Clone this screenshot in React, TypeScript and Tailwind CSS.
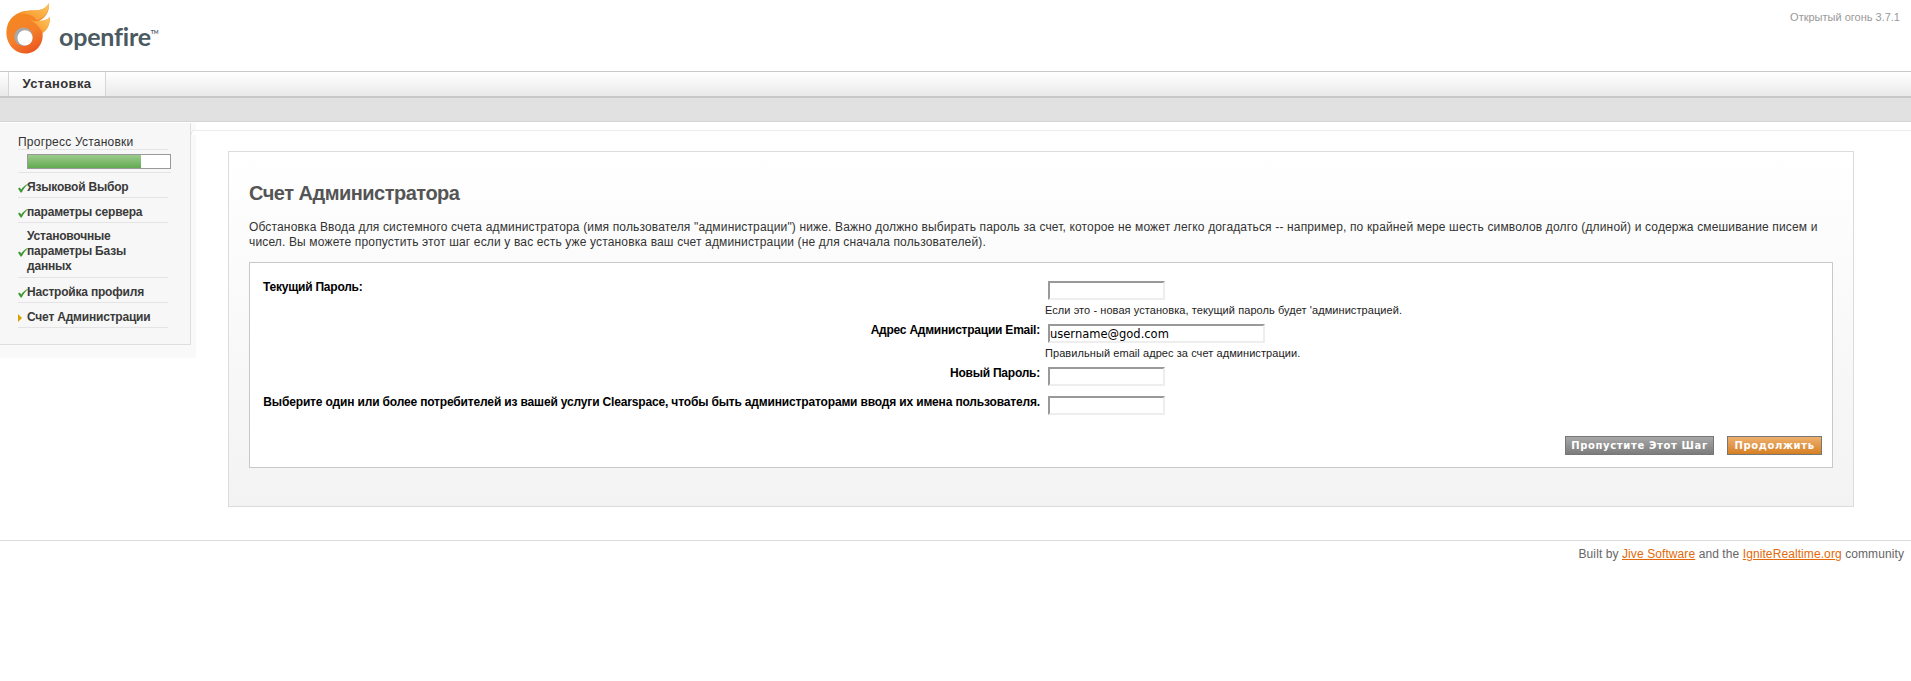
import React from "react";

const sans = "font-['Liberation_Sans',Arial,sans-serif]";

function Logo() {
  return (
    <svg width="56" height="56" viewBox="0 0 56 56" className="shrink-0">
      <defs>
        <linearGradient id="ring" x1="0.15" y1="0.1" x2="0.6" y2="1">
          <stop offset="0" stopColor="#f58a20" />
          <stop offset="0.6" stopColor="#f4802a" />
          <stop offset="1" stopColor="#ea5523" />
        </linearGradient>
        <linearGradient id="flame" x1="0" y1="1" x2="1" y2="0">
          <stop offset="0" stopColor="#f68d20" />
          <stop offset="1" stopColor="#fdc860" />
        </linearGradient>
      </defs>
      <path d="M48.7 3.3C46 9 40 11 33 10.5C22 10 10 14 7 27C4 40 12 53 25 53.5C36 54 44 44 42.5 33C47 30 50 25 50 17C47 20 43 21 39 21C45 18 50 12 48.7 3.3Z" fill="url(#ring)" />
      <path d="M48.7 3.3C46 9 40 11 33 10.5C28 10.3 23 11.5 19 14C27 13 33 15 37 20.5C44 18 50 12 48.7 3.3Z" fill="url(#flame)" />
      <path d="M50 17C47 20 43 21 39 21C36 21.5 33 21 30 20C35 22 40 27 42.5 33C47 30 50 25 50 17Z" fill="url(#flame)" />
      <circle cx="23.5" cy="36.7" r="9.2" fill="#a8a8a8" />
      <circle cx="25" cy="37.8" r="7.6" fill="#fff" />
    </svg>
  );
}

function Check() {
  return (
    <svg width="10" height="9" viewBox="0 0 10 9" className="block shrink-0">
      <path d="M0 4.6L1.8 3.6L3.2 5.4C4.8 3.2 6.8 1.4 9.6 0L9.8 0.5C7.4 2.4 5.4 5 3.8 8.6L2.6 8.6Z" fill="#3f9a35" />
    </svg>
  );
}

function SideItem({ children, active }: { children: React.ReactNode; active?: boolean }) {
  return (
    <div className="flex items-center h-[25px] border-b border-[#e4e4e4] text-[12px] leading-[15px] font-bold tracking-[-0.2px] text-[#3a3a3a] pt-[5px]">
      <span className="w-[9px] shrink-0 flex items-center">
        {active ? (
          <span className="w-0 h-0 border-y-[4px] border-y-transparent border-l-[4px] border-l-[#d9a000]" />
        ) : (
          <span className="-mr-1 mt-[1px]"><Check /></span>
        )}
      </span>
      <span className="flex-1">{children}</span>
    </div>
  );
}

function Field({ w, value }: { w: string; value?: string }) {
  return (
    <input
      readOnly
      value={value ?? ""}
      className={`${w} block h-[19px] border-2 border-t-[#999] border-l-[#999] border-r-[#eee] border-b-[#eee] bg-white px-0 text-[11.5px] text-black font-['DejaVu_Sans',sans-serif] outline-none`}
    />
  );
}

const label = "font-bold text-right -mt-[2px] pr-[1px] tracking-[-0.23px] whitespace-nowrap";
const help = "-ml-[3px] mt-[3px] text-[11px] leading-[14px] tracking-[0.07px] text-[#222]";

export default function App() {
  return (
    <div className={`${sans} w-full h-[681px] bg-white overflow-hidden`}>
      <header className="h-[71px] flex justify-between border-b border-[#c8c8c8] box-content">
        <div className="flex items-start">
          <Logo />
          <span className="ml-[3px] mt-[16px] flex items-start font-['Lato',sans-serif] font-bold text-[25px] leading-[40px] tracking-[-0.2px] text-[#4b5960]">
            openfire<sup className="text-[5px] leading-[8px] mt-[12px] top-0 font-bold">TM</sup>
          </span>
        </div>
        <div className="pt-[10px] pr-[11px] text-[11px] leading-[14px] text-[#999]">Открытый огонь 3.7.1</div>
      </header>

      <nav className="h-[26px] flex pl-[8px] bg-gradient-to-b from-white to-[#e9e9e9] border-b-2 border-[#c8c8c8]">
        <div className="w-[98px] h-[24px] flex items-center justify-center bg-gradient-to-b from-white to-[#f3f3f3] border-x border-[#d6d6d6] text-[13px] font-bold tracking-[0.35px] text-[#333]">
          Установка
        </div>
      </nav>
      <div className="h-[24px] bg-[#e1e1e1] border-b border-[#d4d4d4]" />

      <main className="flex h-[417px] pt-px border-b border-[#dcdcdc] box-content">
        <aside className="relative w-[196px] h-[235px] shrink-0 bg-[#f9f9f9]">
          <div className="w-[191px] h-[222px] pl-[18px] pr-[22px] pt-[6px] bg-[#f7f7f7] border-r border-b border-[#dedede]">
            <div className="h-[21px] border-b border-[#e4e4e4] text-[12px] leading-[15px] tracking-[0.22px] text-[#333] pt-[6px]">
              Прогресс Установки
            </div>
            <div className="h-[23px] border-b border-[#e4e4e4] pl-[9px] pt-[4px] -mr-[3px]">
              <div className="h-[15px] border border-[#999] bg-white">
                <div className="h-full w-[113px] bg-gradient-to-b from-[#9ccb8c] to-[#62ab51]" />
              </div>
            </div>
            <SideItem>Языковой Выбор</SideItem>
            <SideItem>параметры сервера</SideItem>
            <div className="flex items-center h-[55px] border-b border-[#e4e4e4] text-[12px] leading-[15px] font-bold tracking-[-0.2px] text-[#3a3a3a] pt-[3px]">
              <span className="w-[9px] shrink-0"><span className="block -mr-1 mt-[1px]"><Check /></span></span>
              <span className="flex-1">Установочные параметры Базы данных</span>
            </div>
            <SideItem>Настройка профиля</SideItem>
            <SideItem active>Счет Администрации</SideItem>
          </div>
          <span className="absolute top-[7px] right-0 w-[5px] h-[5px] bg-white border-t border-l border-[#ececec] rounded-tl-[3px]" />
        </aside>

        <section className="flex-1 mt-[7px] bg-white border-t border-[#ececec]">
          <div className="pl-[32px] pr-[57px] pt-[20px]">
            <div className="h-[356px] px-[20px] border border-[#dcdcdc] bg-gradient-to-b from-white to-[#f3f3f3]">
              <h1 className="pt-[29px] text-[20px] leading-[24px] font-bold tracking-[-0.5px] text-[#555]">Счет Администратора</h1>
              <p className="mt-[15px] text-[12px] leading-[15px] tracking-[0.15px] text-[#333]">
                Обстановка Ввода для системного счета администратора (имя пользователя "администрации") ниже. Важно должно выбирать пароль за счет, которое не может легко догадаться -- например, по крайней мере шесть символов долго (длиной) и содержа смешивание писем и чисел. Вы можете пропустить этот шаг если у вас есть уже установка ваш счет администрации (не для сначала пользователей).
              </p>
              <div className="mt-[12px] h-[206px] bg-white border border-[#c8c8c8] pl-[13px] pr-[10px] pt-[18px]">
                <div className="grid grid-cols-[778px_1fr] gap-x-[7px] text-[12px] leading-[16px] text-black">
                  <div className="font-bold -mt-[2px] tracking-[-0.23px] h-[43px]">Текущий Пароль:</div>
                  <div className="h-[43px]">
                    <Field w="w-[117px]" />
                    <div className={help}>Если это - новая установка, текущий пароль будет 'администрацией.</div>
                  </div>
                  <div className={label}>Адрес Администрации Email:</div>
                  <div className="h-[43px]">
                    <Field w="w-[217px]" value="username@god.com" />
                    <div className={help}>Правильный email адрес за счет администрации.</div>
                  </div>
                  <div className={label}>Новый Пароль:</div>
                  <div className="h-[29px]"><Field w="w-[117px]" /></div>
                  <div className="font-bold text-right -mt-[2px] pr-[1px] tracking-[-0.16px] whitespace-nowrap">Выберите один или более потребителей из вашей услуги Clearspace, чтобы быть администраторами вводя их имена пользователя.</div>
                  <div className="h-[29px]"><Field w="w-[117px]" /></div>
                </div>
                <div className="flex justify-end gap-[13px] mt-[11px]">
                  <button className="w-[149px] h-[19px] border border-[#777] bg-gradient-to-b from-[#a8a8a8] to-[#7c7c7c] text-white text-[10px] leading-[16px] font-bold tracking-[0.65px] font-['DejaVu_Sans',sans-serif]">Пропустите Этот Шаг</button>
                  <button className="w-[95px] h-[19px] border border-[#777] bg-gradient-to-b from-[#eeb06c] to-[#d67f1e] text-white text-[10px] leading-[16px] font-bold tracking-[0.65px] font-['DejaVu_Sans',sans-serif]">Продолжить</button>
                </div>
              </div>
            </div>
          </div>
        </section>
      </main>

      <footer className="pt-[5px] pr-[7px] text-right text-[12px] leading-[16px] tracking-[0.09px] text-[#666]">
        Built by <a className="text-[#e26a0a] underline">Jive Software</a> and the <a className="text-[#e26a0a] underline">IgniteRealtime.org</a> community
      </footer>
    </div>
  );
}
